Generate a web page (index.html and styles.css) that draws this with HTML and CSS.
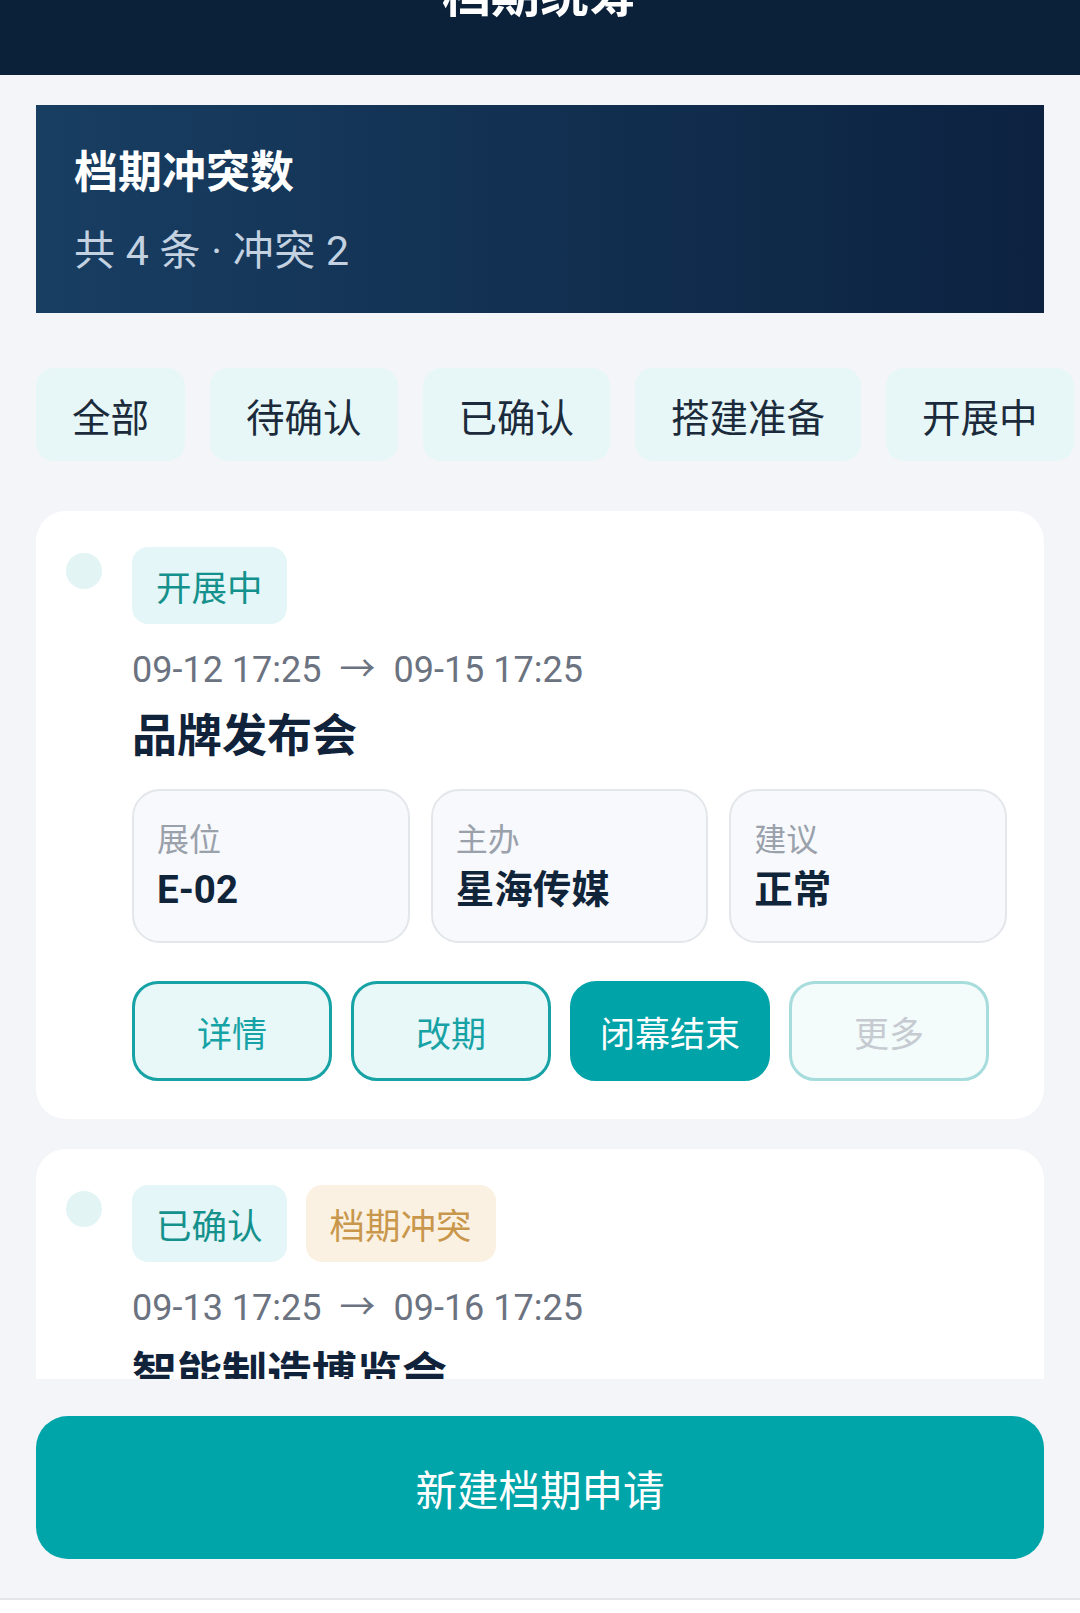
FILE: index.html
```html
<!DOCTYPE html>
<html lang="zh-CN">
<head>
  <meta charset="UTF-8" />
  <meta name="viewport" content="width=device-width, initial-scale=1" />
  <title>档期统筹</title>
  <link rel="stylesheet" href="styles.css">
</head>
<body>
  <!-- TOP BAR -->
  <header class="topbar">
    <h1 class="topbar-title">档期统筹</h1>
  </header>

  <main class="page">
    <!-- SUMMARY -->
    <section class="hero">
      <h2 class="hero-title">档期冲突数</h2>
      <p class="hero-sub">共 4 条 · 冲突 2</p>
    </section>

    <!-- FILTER TABS -->
    <nav class="tabs">
      <span class="tab">全部</span>
      <span class="tab">待确认</span>
      <span class="tab">已确认</span>
      <span class="tab">搭建准备</span>
      <span class="tab">开展中</span>
    </nav>

    <!-- LIST -->
    <div class="list">
      <article class="card">
        <span class="dot"></span>
        <div class="card-body">
          <div class="badges">
            <span class="badge">开展中</span>
          </div>
          <div class="date">09-12 17:25<span class="arrow">→</span>09-15 17:25</div>
          <h3 class="card-title">品牌发布会</h3>
          <div class="info">
            <div class="info-box">
              <span class="info-label">展位</span>
              <span class="info-value">E-02</span>
            </div>
            <div class="info-box">
              <span class="info-label">主办</span>
              <span class="info-value">星海传媒</span>
            </div>
            <div class="info-box">
              <span class="info-label">建议</span>
              <span class="info-value">正常</span>
            </div>
          </div>
          <div class="actions">
            <button class="btn">详情</button>
            <button class="btn">改期</button>
            <button class="btn btn-primary">闭幕结束</button>
            <button class="btn btn-muted">更多</button>
          </div>
        </div>
      </article>

      <article class="card">
        <span class="dot"></span>
        <div class="card-body">
          <div class="badges">
            <span class="badge">已确认</span>
            <span class="badge badge-warn">档期冲突</span>
          </div>
          <div class="date">09-13 17:25<span class="arrow">→</span>09-16 17:25</div>
          <h3 class="card-title">智能制造博览会</h3>
          <div class="info">
            <div class="info-box">
              <span class="info-label">展位</span>
              <span class="info-value">A-01</span>
            </div>
            <div class="info-box">
              <span class="info-label">主办</span>
              <span class="info-value">华创会展</span>
            </div>
            <div class="info-box">
              <span class="info-label">建议</span>
              <span class="info-value">协调</span>
            </div>
          </div>
          <div class="actions">
            <button class="btn">详情</button>
            <button class="btn">改期</button>
            <button class="btn btn-primary">开始搭建</button>
            <button class="btn btn-muted">更多</button>
          </div>
        </div>
      </article>
    </div>

    <button class="create-btn">新建档期申请</button>
  </main>

  <footer class="bottombar"></footer>
</body>
</html>
```

FILE: styles.css
```css
body {
  margin: 0;
  background: #f3f5f8;
  font-family: Roboto, "Noto Sans CJK SC", sans-serif;
  color: #10243a;
}
h1, h2, h3, p {
  margin: 0;
}
.topbar {
  height: 75px;
  background: #0b2139;
  overflow: hidden;
}
.topbar-title {
  margin-top: -29px;
  font-size: 49px;
  line-height: 49px;
  font-weight: bold;
  color: #fff;
  text-align: center;
}
.page {
  padding: 30px 36px 0;
}
.hero {
  height: 208px;
  box-sizing: border-box;
  padding: 43px 38px 0;
  background: linear-gradient(90deg, #183e62, #0c2240);
}
.hero-title {
  font-size: 44px;
  line-height: 50px;
  font-weight: bold;
  color: #fff;
}
.hero-sub {
  margin-top: 30px;
  font-size: 41px;
  line-height: 46px;
  letter-spacing: 0.3px;
  color: #c3d1e0;
}
.tabs {
  display: flex;
  gap: 25px;
  margin: 55px -36px 0 0;
  overflow: hidden;
}
.tab {
  flex-shrink: 0;
  height: 93px;
  padding: 0 36px;
  display: flex;
  align-items: center;
  border-radius: 18px;
  background: #e7f7f8;
  font-size: 38.5px;
  color: #1b2b3b;
}
.list {
  margin-top: 50px;
  height: 868px;
  overflow: hidden;
  display: flex;
  flex-direction: column;
  gap: 30px;
}
.card {
  flex-shrink: 0;
  display: flex;
  gap: 30px;
  padding: 36px 37px 38px 30px;
  background: #fff;
  border-radius: 30px;
}
.dot {
  flex-shrink: 0;
  width: 36px;
  height: 36px;
  margin-top: 6px;
  border-radius: 50%;
  background: #e3f4f5;
}
.card-body {
  flex: 1;
}
.badges {
  display: flex;
  gap: 19px;
}
.badge {
  height: 77px;
  padding: 0 24px;
  display: flex;
  align-items: center;
  border-radius: 16px;
  background: #e4f6f7;
  color: #14918c;
  font-size: 35.5px;
}
.badge-warn {
  background: #fbf1e2;
  color: #c9974b;
}
.date {
  margin-top: 21px;
  font-size: 36px;
  line-height: 50px;
  color: #6b7280;
}
.arrow {
  display: inline-block;
  width: 72px;
  text-align: center;
}
.card-title {
  margin-top: 14px;
  font-size: 45px;
  line-height: 56px;
  font-weight: bold;
  color: #10233a;
}
.info {
  display: grid;
  grid-template-columns: repeat(3, 1fr);
  gap: 21px;
  margin-top: 24px;
}
.info-box {
  height: 154px;
  box-sizing: border-box;
  padding: 27px 23px 0;
  display: flex;
  flex-direction: column;
  border: 2px solid #e3e6ea;
  border-radius: 28px;
  background: #f7f9fc;
}
.info-label {
  font-size: 32px;
  line-height: 44px;
  color: #9aa1ab;
}
.info-value {
  margin-top: 4px;
  font-size: 38.5px;
  line-height: 48px;
  font-weight: bold;
  color: #10243a;
}
.actions {
  display: flex;
  gap: 19px;
  margin-top: 38px;
}
.btn {
  width: 200px;
  height: 100px;
  padding: 0;
  border: 3px solid #17a2a5;
  border-radius: 26px;
  background: #e8f8f8;
  color: #17a2a5;
  font-family: "Noto Sans CJK SC", sans-serif;
  font-size: 35px;
}
.btn-primary {
  border-color: #00a3a8;
  background: #00a3a8;
  color: #fff;
}
.btn-muted {
  border-color: #a6dcdc;
  background: #f3fbfb;
  color: #c6cbd1;
}
.create-btn {
  display: block;
  width: 100%;
  height: 143px;
  margin-top: 37px;
  border: none;
  border-radius: 32px;
  background: #00a5aa;
  color: #fff;
  font-family: "Noto Sans CJK SC", sans-serif;
  font-size: 41.5px;
}
.bottombar {
  margin-top: 39px;
  height: 15px;
  border-top: 2px solid #e3e5e8;
  background: #fff;
}
```
